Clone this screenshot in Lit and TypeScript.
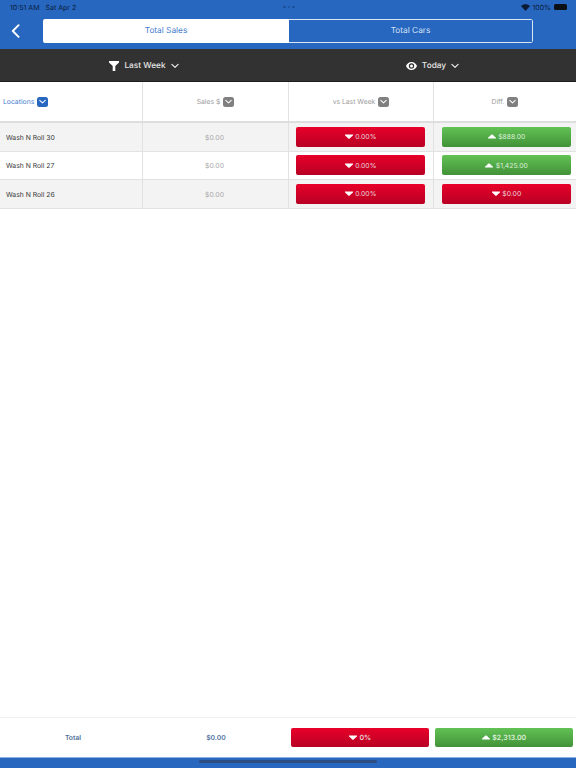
import { LitElement, html, css, svg } from "lit";
import { customElement } from "lit/decorators.js";

const chevron = svg`<path d="M1 1.5 L4.5 4.8 L8 1.5" fill="none" stroke="currentColor" stroke-width="1.3" stroke-linecap="round" stroke-linejoin="round"/>`;

type Row = { name: string; sales: string; vs: [string, boolean]; diff: [string, boolean] };
const rows: Row[] = [
  { name: "Wash N Roll 30", sales: "$0.00", vs: ["0.00%", false], diff: ["$888.00", true] },
  { name: "Wash N Roll 27", sales: "$0.00", vs: ["0.00%", false], diff: ["$1,425.00", true] },
  { name: "Wash N Roll 26", sales: "$0.00", vs: ["0.00%", false], diff: ["$0.00", false] },
];

@customElement("app-root")
export class AppRoot extends LitElement {
  static styles = css`
    :host { display: block; font-family: Inter, "Liberation Sans", sans-serif; text-rendering: geometricPrecision; }
    * { box-sizing: border-box; }
    .page { width: 576px; height: 768px; display: flex; flex-direction: column; background: #fff; overflow: hidden; }

    .top { background: #2767bf; height: 49px; display: flex; flex-direction: column; color: #fff; }
    .status { height: 14px; display: grid; grid-template-columns: 1fr auto 1fr; align-items: center; padding: 0 8px 0 10px; font-size: 7px; color: #0a1c3a; }
    .status .left { display: flex; gap: 6px; }
    .dots { display: flex; gap: 2px; }
    .dots i { width: 2.4px; height: 2.4px; border-radius: 50%; background: #1c4f99; }
    .status .right { display: flex; justify-content: flex-end; align-items: center; gap: 2px; }
    .battery { width: 13px; height: 6px; border-radius: 1.5px; background: #0c0f16; margin: 0 1px 0 1px; }
    .nav { display: flex; align-items: center; padding: 5px 0 0 11px; }
    .back { width: 9px; height: 14px; margin-right: 23px; display: block; }
    .segment { width: 490px; height: 24px; display: grid; grid-template-columns: 246px 244px; border-radius: 2px; overflow: hidden; font-size: 8.3px; }
    .seg { display: flex; align-items: center; justify-content: center; }
    .seg.on { background: #fff; color: #3f7bd0; }
    .seg.off { border: 1px solid #dbe6f5; border-left: 0; border-radius: 0 2px 2px 0; color: #d5e2f5; background: #2767bf; }

    .filters { height: 33px; background: #323232; border-bottom: 1px solid #1d1d1d; display: grid; grid-template-columns: 288px 288px; color: #e6e6e6; font-size: 8.3px; font-weight: 500; }
    .filter { display: flex; align-items: center; justify-content: center; gap: 5px; padding-top: 1px; }
    .filter.b { padding-left: 1px; }
    .filter svg.chev { width: 8px; height: 5.5px; color: #f0f0f0; }

    .head, .row { display: grid; grid-template-columns: 143px 146px 145px 142px; }
    .head { height: 41px; border-bottom: 2px solid #dedede; background: #fff; }
    .hcell { display: flex; align-items: center; justify-content: center; gap: 3px; font-size: 6.8px; color: #9b9b9b; border-right: 1px solid #e2e2e2; }
    .hcell:last-child { border-right: 0; }
    .hcell.loc { justify-content: flex-start; padding-left: 3px; color: #3f7bd0; }
    .tag { width: 11px; height: 10px; border-radius: 2.5px; background: #808080; color: #fff; display: flex; align-items: center; justify-content: center; }
    .tag.blue { background: #2767bf; }
    .tag svg { width: 7px; height: 5px; }

    .row { height: 28.6px; border-bottom: 1px solid #e2e2e2; background: #fff; }
    .row.alt { background: #f3f3f3; }
    .cell { display: flex; align-items: center; border-right: 1px solid #e2e2e2; font-size: 6.8px; }
    .cell:last-child { border-right: 0; }
    .cell.name { padding: 1px 0 0 6px; color: #3a3a3a; }
    .cell.sales { justify-content: center; padding: 1px 2px 0 0; color: #a8a8a8; }
    .cell.c3 { padding-left: 7px; padding-right: 8px; }
    .cell.c4 { padding-left: 8px; padding-right: 5px; }

    .pill { flex: 1; height: 20px; border-radius: 2px; display: flex; align-items: center; justify-content: center; gap: 2.5px; font-size: 6.8px; color: #e9d5d8; }
    .pill.red { background: linear-gradient(#e80029, #b80024); }
    .pill.green { background: linear-gradient(#62c255, #429238); color: #dcefd8; }
    .pill svg { width: 8px; height: 5px; fill: #fff; }

    .spacer { flex: 1; }

    .foot { height: 40px; border-top: 1px solid #efefef; display: grid; grid-template-columns: 146px 140px 147px 143px; background: #fff; }
    .fcell { display: flex; align-items: center; justify-content: center; font-size: 6.8px; font-weight: 600; color: #4f6f9c; }
    .fcell.p3 { padding: 0 4px 0 5px; }
    .fcell.p4 { padding: 0 3px 0 2px; }
    .foot .pill { height: 19.5px; font-size: 7px; font-weight: 600; }

    .home { height: 11px; background: #2767bf; border-top: 1px solid #8fb2e2; display: flex; justify-content: center; padding-top: 2px; }
    .home i { display: block; width: 178px; height: 3px; border-radius: 2px; background: #2d4e83; }
  `;

  private tri(up: boolean) {
    return html`<svg viewBox="0 0 8 5">${up
      ? svg`<path d="M4 0.2 C4.6 0.2 7.2 3.2 8 3.6 V4.6 H0 V3.6 C0.8 3.2 3.4 0.2 4 0.2 Z" />`
      : svg`<path d="M0 0.4 H8 V1.4 C7.2 1.8 4.6 4.8 4 4.8 C3.4 4.8 0.8 1.8 0 1.4 Z" />`}</svg>`;
  }

  private pill(v: [string, boolean]) {
    return html`<div class="pill ${v[1] ? "green" : "red"}">${this.tri(v[1])}<span>${v[0]}</span></div>`;
  }

  private tag(label: string, blue = false) {
    return html`<span>${label}</span><span class="tag ${blue ? "blue" : ""}"><svg viewBox="0 0 9 6">${chevron}</svg></span>`;
  }

  render() {
    return html`<div class="page">
      <div class="top">
        <div class="status">
          <div class="left"><span>10:51 AM</span><span>Sat Apr 2</span></div>
          <div class="dots"><i></i><i></i><i></i></div>
          <div class="right">
            <svg width="9" height="7" viewBox="0 0 12 9"><path d="M6 9 L0 2.6 C3.4 -0.6 8.6 -0.6 12 2.6 Z" fill="#0c1a33"/></svg>
            <span>100%</span><span class="battery"></span>
          </div>
        </div>
        <div class="nav">
          <svg class="back" viewBox="0 0 9 14"><path d="M7.6 1.2 L1.8 7 L7.6 12.8" fill="none" stroke="#fff" stroke-width="1.9" stroke-linecap="round" stroke-linejoin="round"/></svg>
          <div class="segment">
            <div class="seg on">Total Sales</div>
            <div class="seg off">Total Cars</div>
          </div>
        </div>
      </div>

      <div class="filters">
        <div class="filter a">
          <svg width="10" height="10" viewBox="0 0 10 10"><path d="M0 0 H10 V1.4 L6.3 5 V10 H3.7 V5 L0 1.4 Z" fill="#fff"/></svg>
          <span>Last Week</span>
          <svg class="chev" viewBox="0 0 9 6">${chevron}</svg>
        </div>
        <div class="filter b">
          <svg width="11" height="8" viewBox="0 0 11 8"><path fill-rule="evenodd" d="M5.5 0 C8.2 0 10.2 2 11 4 C10.2 6 8.2 8 5.5 8 C2.8 8 0.8 6 0 4 C0.8 2 2.8 0 5.5 0 Z M5.5 1.3 A2.7 2.7 0 1 0 5.5 6.7 A2.7 2.7 0 1 0 5.5 1.3 Z" fill="#fff"/><circle cx="5.5" cy="4" r="1.5" fill="#fff"/></svg>
          <span>Today</span>
          <svg class="chev" viewBox="0 0 9 6">${chevron}</svg>
        </div>
      </div>

      <div class="head">
        <div class="hcell loc">${this.tag("Locations", true)}</div>
        <div class="hcell">${this.tag("Sales $")}</div>
        <div class="hcell">${this.tag("vs Last Week")}</div>
        <div class="hcell">${this.tag("Diff.")}</div>
      </div>

      ${rows.map((r, i) => html`<div class="row ${i % 2 === 0 ? "alt" : ""}">
        <div class="cell name">${r.name}</div>
        <div class="cell sales">${r.sales}</div>
        <div class="cell c3">${this.pill(r.vs)}</div>
        <div class="cell c4">${this.pill(r.diff)}</div>
      </div>`)}

      <div class="spacer"></div>

      <div class="foot">
        <div class="fcell">Total</div>
        <div class="fcell">$0.00</div>
        <div class="fcell p3">${this.pill(["0%", false])}</div>
        <div class="fcell p4">${this.pill(["$2,313.00", true])}</div>
      </div>
      <div class="home"><i></i></div>
    </div>`;
  }
}
